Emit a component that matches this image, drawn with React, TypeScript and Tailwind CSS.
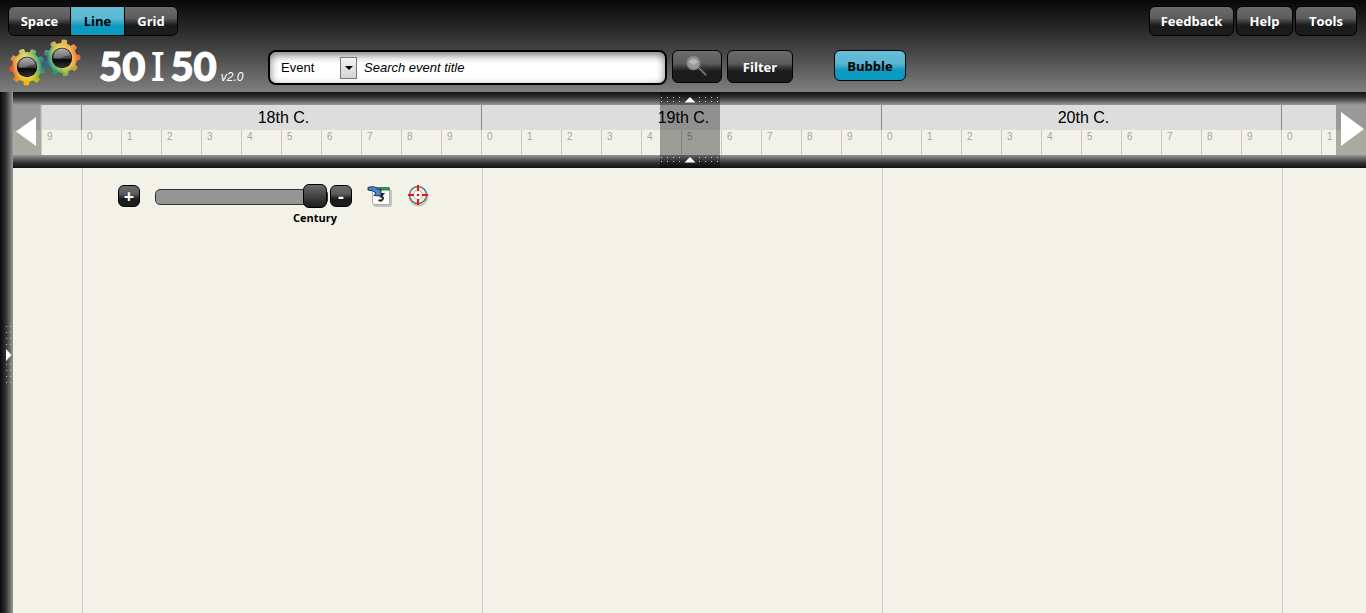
import { useState } from 'react';
import type { ButtonHTMLAttributes } from 'react';

const darkFill = 'bg-linear-to-b from-[#6c6c6c] via-[#5c5c5c] via-40% to-[#1c1c1c] to-65%';
const blueFill = 'bg-linear-to-b from-[#67bdd6] via-[#5bb8d3] via-40% to-[#0c9bc0] to-65%';

function GlossyButton({
  blue = false,
  className = '',
  ...props
}: ButtonHTMLAttributes<HTMLButtonElement> & { blue?: boolean }) {
  return (
    <button
      type="button"
      className={`flex items-center justify-center border border-black leading-4 font-bold ${
        blue ? `${blueFill} text-black` : `${darkFill} text-white`
      } ${className}`}
      {...props}
    />
  );
}

const tooth = 'M-3.200 -12 L-2.700 -18 Q0 -19 2.700 -18 L3.200 -12Z';

function Gear({ x, y, turn, flip }: { x: number; y: number; turn: number; flip: boolean }) {
  return (
    <g transform={`translate(${x} ${y})`}>
      <mask id={flip ? 'maskB' : 'maskA'} maskUnits="userSpaceOnUse" x="-20" y="-20" width="40" height="40">
        <circle r="15" fill="#fff" />
        {Array.from({ length: 9 }, (_, i) => (
          <path key={i} d={tooth} fill="#fff" transform={`rotate(${turn + i * 40})`} />
        ))}
      </mask>
      <g mask={flip ? 'url(#maskB)' : 'url(#maskA)'}>
        <rect x="-20" y="-20" width="40" height="40" fill={flip ? 'url(#gearB)' : 'url(#gearA)'} />
        <rect x="-20" y="-20" width="40" height="40" fill={flip ? 'url(#washB)' : 'url(#washA)'} />
        <circle r="15" fill="url(#glow)" />
      </g>
      <circle r="10.200" fill="#111" />
      <circle r="9.400" fill="url(#ball)" />
      <path d="M-8 0 A8 8 0 0 1 8 -3 Q2 -2 -1 0 Q-4 1 -8 0Z" fill="#fff" opacity=".22" />
    </g>
  );
}

function GearLogo() {
  return (
    <svg width="74" height="50" viewBox="0 0 74 50" aria-hidden="true">
      <defs>
        <linearGradient id="gearA" gradientUnits="userSpaceOnUse" x1="-17" y1="4" x2="18" y2="-3">
          <stop offset="0" stopColor="#d4482a" />
          <stop offset=".25" stopColor="#f09a34" />
          <stop offset=".5" stopColor="#e6cc30" />
          <stop offset=".75" stopColor="#3da65a" />
          <stop offset="1" stopColor="#1673a3" />
        </linearGradient>
        <linearGradient id="washA" gradientUnits="userSpaceOnUse" x1="0" y1="-18" x2="4" y2="18">
          <stop offset="0" stopColor="#a8d59a" stopOpacity=".6" />
          <stop offset=".4" stopColor="#e8d070" stopOpacity="0" />
          <stop offset=".6" stopColor="#e6bc00" stopOpacity="0" />
          <stop offset="1" stopColor="#e6bc00" stopOpacity=".9" />
        </linearGradient>
        <linearGradient id="gearB" gradientUnits="userSpaceOnUse" x1="-17" y1="7" x2="17" y2="-3">
          <stop offset="0" stopColor="#1769a0" />
          <stop offset=".28" stopColor="#2b9c66" />
          <stop offset=".5" stopColor="#dccc34" />
          <stop offset=".78" stopColor="#f2a03a" />
          <stop offset="1" stopColor="#e2683c" />
        </linearGradient>
        <linearGradient id="washB" gradientUnits="userSpaceOnUse" x1="-2" y1="-18" x2="3" y2="18">
          <stop offset="0" stopColor="#f2a860" stopOpacity=".8" />
          <stop offset=".4" stopColor="#e8d070" stopOpacity="0" />
          <stop offset=".65" stopColor="#3fa050" stopOpacity="0" />
          <stop offset="1" stopColor="#3fa050" stopOpacity=".5" />
        </linearGradient>
        <radialGradient id="glow">
          <stop offset=".65" stopColor="#f6e890" stopOpacity=".5" />
          <stop offset="1" stopColor="#f6e890" stopOpacity="0" />
        </radialGradient>
        <linearGradient id="ball" x1="0" y1="0" x2="0" y2="1">
          <stop offset="0" stopColor="#999" />
          <stop offset=".5" stopColor="#444" />
          <stop offset=".6" stopColor="#050505" />
          <stop offset="1" stopColor="#333" />
        </linearGradient>
      </defs>
      <Gear x={19} y={28} turn={22} flip={false} />
      <Gear x={54} y={19} turn={8} flip={true} />
    </svg>
  );
}

function Magnifier() {
  return (
    <svg width="24" height="24" viewBox="0 0 24 24" aria-hidden="true">
      <path d="M13 12 L20.500 19.500" stroke="#4c4c4c" strokeWidth="3" strokeLinecap="round" />
      <path d="M13 12 L20.500 19.500" stroke="#888" strokeWidth="1" />
      <circle cx="8.500" cy="8" r="6.500" fill="#9a9a9a" stroke="#808080" strokeWidth="1.500" />
      <path d="M4 7 A5 5 0 0 1 13 7 L8.500 10Z" fill="#bababa" />
    </svg>
  );
}

function CalendarIcon() {
  return (
    <svg width="28" height="26" viewBox="0 0 28 26" aria-hidden="true">
      <rect x="7" y="5" width="19" height="18" rx="3" fill="#8b8b84" opacity=".45" />
      <rect x="6.500" y="4.500" width="17" height="16" rx="2" fill="#fff" stroke="#aaa" />
      <path d="M10 3 H22.500 Q24 3 24 4.500 V6.500 H10Z" fill="#2d8a4a" />
      <path d="M13 10 H17 L15 12.500 Q18 13.500 16.500 15.500 Q15 17.500 12.500 16" fill="none" stroke="#222" strokeWidth="2" />
      <path d="M2 3.500 Q9 1 12.500 6 L15 5 V12 L8 11.500 L10 9 Q7 6 2 6Z" fill="#4a86d4" stroke="#1c2f58" />
    </svg>
  );
}

function TargetIcon() {
  return (
    <svg width="24" height="24" viewBox="0 0 24 24" aria-hidden="true">
      <circle cx="12.500" cy="12.500" r="9" fill="none" stroke="#c4c4bc" strokeWidth="2" />
      <circle cx="12" cy="11" r="8.500" fill="#ececea" stroke="#707070" strokeWidth="1.500" />
      <circle cx="12" cy="11" r="4.500" fill="#fff" stroke="#b4b4b4" />
      <path d="M12 1 V7 M12 15 V21 M2 11 H8 M16 11 H22" stroke="#f01414" strokeWidth="2" />
      <circle cx="12" cy="11" r="1.300" fill="#f01414" />
    </svg>
  );
}

function Grip() {
  return (
    <svg width="60" height="8" viewBox="0 0 60 8" aria-hidden="true">
      {[1, 7, 13, 19, 39, 45, 51, 57].map((x) => (
        <g key={x} fill="#c8c8c8">
          <rect x={x} y="1" width="1" height="1" />
          <rect x={x} y="5" width="1" height="1" />
        </g>
      ))}
      <path d="M24.500 6.500 L30 1 L35.500 6.500Z" fill="#fff" />
    </svg>
  );
}

function Cell({ digit }: { digit: number }) {
  return (
    <div className="h-full w-10 shrink-0 border-l border-[#c8c8c8] pl-[5px] font-[Liberation_Sans,sans-serif] text-[10px] leading-[14px] text-[#a5a5a5]">
      {digit}
    </div>
  );
}

function Century({ label, digits, strong = true }: { label?: string; digits: number[]; strong?: boolean }) {
  return (
    <div className="shrink-0">
      <div
        className={`flex h-[25px] items-center justify-center border-l bg-[#ddd] pl-1 font-[Liberation_Sans,sans-serif] text-base leading-5 text-black ${
          strong ? 'border-[#888]' : 'border-[#c8c8c8]'
        }`}
      >
        {label}
      </div>
      <div className="flex h-[25px] bg-[#f2f2e9]">
        {digits.map((d) => (
          <Cell key={d} digit={d} />
        ))}
      </div>
    </div>
  );
}

const decade = [0, 1, 2, 3, 4, 5, 6, 7, 8, 9];

export default function App() {
  const [view, setView] = useState('Line');
  const [zoom, setZoom] = useState(100);
  return (
    <div className="flex min-h-screen flex-col overflow-hidden bg-[#f2f2e9] font-[Open_Sans,sans-serif] text-[13px]">
      <header className="h-[92px] bg-linear-to-b from-[#080808] to-[#7f7f7f] pt-[6px]">
        <div className="flex h-[30px] justify-between pr-[9px] pl-2">
          <nav className="flex overflow-hidden rounded-md">
            {['Space', 'Line', 'Grid'].map((name) => (
              <GlossyButton
                key={name}
                blue={view === name}
                onClick={() => setView(name)}
                className={
                  name === 'Space'
                    ? 'w-[63px] rounded-l-md'
                    : name === 'Line'
                      ? '-ml-px w-[55px]'
                      : '-ml-px w-[54px] rounded-r-md'
                }
              >
                {name}
              </GlossyButton>
            ))}
          </nav>
          <div className="flex gap-[2px]">
            <GlossyButton className="w-[85px] rounded-md">Feedback</GlossyButton>
            <GlossyButton className="w-[57px] rounded-md">Help</GlossyButton>
            <GlossyButton className="w-[62px] rounded-md">Tools</GlossyButton>
          </div>
        </div>
        <div className="flex items-start pl-2">
          <div className="pt-[3px]">
            <GearLogo />
          </div>
          <div className="flex w-[186px] items-baseline pt-[10px] pl-[17px] text-white">
            <h1 className="flex items-baseline font-[Lato,sans-serif] text-[40px] leading-10 font-black">
              <span className="[-webkit-text-stroke:1px_white]">50</span>
              <span className="flex w-[25px] justify-center font-[Noto_Sans,sans-serif] font-medium">I</span>
              <span className="[-webkit-text-stroke:1px_white]">50</span>
            </h1>
            <span className="ml-1 font-[Liberation_Sans,sans-serif] text-xs italic">v2.0</span>
          </div>
          <form
            className="mt-[14px] flex h-[35px] w-[399px] items-center rounded-lg border-2 border-black bg-white pl-[11px] font-[Liberation_Sans,sans-serif] text-black shadow-[inset_0_3px_9px_#777]"
            onSubmit={(e) => e.preventDefault()}
          >
            <div className="relative flex h-[22px] w-[76px] items-center">
              <select aria-label="Search in" className="h-[22px] w-full appearance-none outline-none">
                <option>Event</option>
                <option>Person</option>
              </select>
              <span className="pointer-events-none absolute top-0 right-0 flex h-[22px] w-[17px] items-center justify-center border border-[#777] bg-linear-to-b from-[#f4f4f4] to-[#d4d4d4]">
                <svg width="8" height="4" viewBox="0 0 8 4" aria-hidden="true">
                  <path d="M0 0 H8 L4 4Z" fill="#000" />
                </svg>
              </span>
            </div>
            <input
              type="text"
              aria-label="Search event title"
              placeholder="Search event title"
              className="ml-[7px] h-[22px] min-w-0 flex-1 bg-transparent italic outline-none placeholder:text-black"
            />
          </form>
          <GlossyButton aria-label="Search" className="mt-[14px] ml-[5px] h-[33px] w-[50px] rounded-md">
            <Magnifier />
          </GlossyButton>
          <GlossyButton className="mt-[14px] ml-[5px] h-[33px] w-[66px] rounded-md">Filter</GlossyButton>
          <GlossyButton blue className="mt-[14px] ml-[41px] h-[31px] w-[72px] rounded-md">
            Bubble
          </GlossyButton>
        </div>
      </header>

      <div className="flex flex-1">
        <aside className="flex w-[13px] shrink-0 items-center bg-linear-to-r from-[#0a0a0a] via-[#2d2d2d] via-40% to-[#999] pt-[5px]">
          <button type="button" aria-label="Open side panel" className="ml-[5px]">
            <svg width="8" height="60" viewBox="0 0 8 60" aria-hidden="true">
              {[1, 7, 13, 19, 39, 45, 51, 57].map((y) => (
                <g key={y} fill="#b8b8a8">
                  <rect x="1" y={y} width="1" height="1" />
                  <rect x="5" y={y} width="1" height="1" />
                </g>
              ))}
              <path d="M1 24 L6.500 30 L1 36Z" fill="#fff" />
            </svg>
          </button>
        </aside>

        <main className="flex min-w-0 flex-1 flex-col">
          <section aria-label="Timeline" className="relative overflow-hidden">
            <div className="h-[13px] bg-linear-to-b from-[#111] via-[#333] via-40% to-[#999]" />
            <div className="flex overflow-hidden bg-[#f2f2e9] pl-7">
              <Century digits={[9]} strong={false} />
              <Century label="18th C." digits={decade} />
              <Century label="19th C." digits={decade} />
              <Century label="20th C." digits={decade} />
              <Century digits={[0, 1]} />
              <div className="h-[25px] flex-1 bg-[#ddd]" />
            </div>
            <div className="h-[13px] bg-linear-to-b from-[#999] via-[#333] via-60% to-[#111]" />

            <button
              type="button"
              aria-label="Earlier"
              className="absolute top-[13px] left-0 flex h-[50px] w-7 items-center justify-center border-r border-[#aaa] bg-linear-to-b from-[#999] from-50% to-[#aaaaa0] to-50%"
            >
              <svg width="22" height="32" viewBox="0 0 22 32" aria-hidden="true">
                <path d="M20 3 V32 L0 17.500Z" fill="#fff" />
              </svg>
            </button>
            <button
              type="button"
              aria-label="Later"
              className="absolute top-[13px] right-0 flex h-[50px] w-[30px] items-center justify-center bg-linear-to-b from-[#999] from-50% to-[#aaaaa0] to-50%"
            >
              <svg width="26" height="36" viewBox="0 0 26 36" aria-hidden="true">
                <path d="M3 0 V34 L26 17Z" fill="#fff" />
              </svg>
            </button>
            <div className="absolute inset-y-0 left-1/2 -ml-[30px] flex w-[60px] flex-col justify-between bg-black/35 pt-1 pb-1">
              <Grip />
              <Grip />
            </div>
          </section>

          <section aria-label="Canvas" className="flex flex-1 overflow-hidden">
            <div className="w-[69px] shrink-0" />
            <div className="w-[400px] shrink-0 border-l border-[#ccc] pt-4 pl-[35px]">
              <div className="flex items-start">
                <GlossyButton aria-label="Zoom in" className="mt-px h-[22px] w-[22px] rounded-md text-lg">
                  +
                </GlossyButton>
                <div className="ml-[15px] w-[173px]">
                  <input
                    id="scale"
                    type="range"
                    value={zoom}
                    onChange={(e) => setZoom(Number(e.target.value))}
                    className="block h-6 w-full appearance-none bg-transparent [&::-webkit-slider-runnable-track]:mt-px [&::-webkit-slider-runnable-track]:h-4 [&::-webkit-slider-runnable-track]:rounded-[5px] [&::-webkit-slider-runnable-track]:border [&::-webkit-slider-runnable-track]:border-[#333] [&::-webkit-slider-runnable-track]:bg-[#959595] [&::-webkit-slider-thumb]:-mt-[6px] [&::-webkit-slider-thumb]:h-6 [&::-webkit-slider-thumb]:w-6 [&::-webkit-slider-thumb]:appearance-none [&::-webkit-slider-thumb]:rounded-md [&::-webkit-slider-thumb]:border [&::-webkit-slider-thumb]:border-black [&::-webkit-slider-thumb]:bg-linear-to-b [&::-webkit-slider-thumb]:from-[#6c6c6c] [&::-webkit-slider-thumb]:to-[#1c1c1c]"
                  />
                  <label htmlFor="scale" className="ml-[138px] block text-[11px] leading-5 font-bold text-black">
                    Century
                  </label>
                </div>
                <GlossyButton aria-label="Zoom out" className="mt-px ml-[2px] h-[22px] w-[22px] rounded-md text-lg">
                  -
                </GlossyButton>
                <button type="button" aria-label="Go to date" className="ml-[14px]">
                  <CalendarIcon />
                </button>
                <button type="button" aria-label="Center" className="ml-3">
                  <TargetIcon />
                </button>
              </div>
            </div>
            <div className="w-[400px] shrink-0 border-l border-[#ccc]" />
            <div className="w-[400px] shrink-0 border-l border-[#ccc]" />
            <div className="w-[400px] shrink-0 border-l border-[#ccc]" />
          </section>
        </main>
      </div>
    </div>
  );
}
